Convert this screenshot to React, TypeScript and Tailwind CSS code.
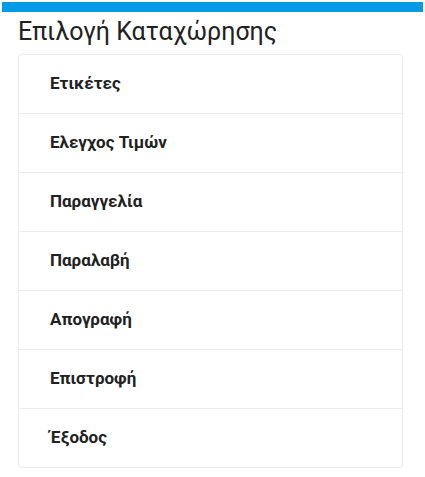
const items = [
  "Ετικέτες",
  "Ελεγχος Τιμών",
  "Παραγγελία",
  "Παραλαβή",
  "Απογραφή",
  "Επιστροφή",
  "Έξοδος",
];

export default function App() {
  return (
    <div className="min-h-[477px] w-[425px] bg-white pt-[2px] font-['Roboto',sans-serif]">
      {/* top bar */}
      <div className="mx-[2px] h-[10px] bg-[#039be5]" />

      <h1 className="ml-[18px] mt-[4px] text-[25px] leading-[32px] font-normal text-[#212121]">
        Επιλογή Καταχώρησης
      </h1>

      <div className="ml-[18px] mt-[6px] w-[385px] rounded-[4px] border border-[#ebebeb] bg-white">
        {items.map((label, i) => (
          <div
            key={label}
            className={
              i < items.length - 1
                ? "flex h-[59px] items-center border-b border-[#ebebeb] pl-[31px]"
                : "flex h-[58px] items-center pl-[31px]"
            }
          >
            <span className="text-[17px] font-bold text-[#212121]">{label}</span>
          </div>
        ))}
      </div>
    </div>
  );
}
